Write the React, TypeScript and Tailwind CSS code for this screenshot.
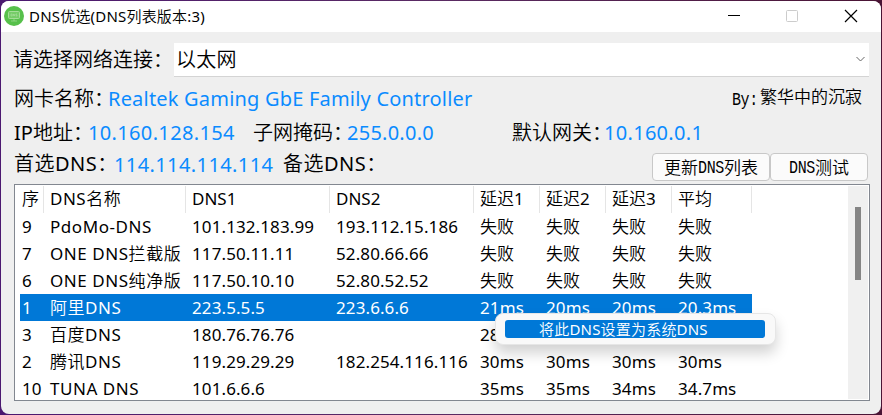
import React from "react";

type Row = string[];

const columns: Row = ["序", "DNS名称", "DNS1", "DNS2", "延迟1", "延迟2", "延迟3", "平均"];

const rows: Row[] = [
  ["9", "PdoMo-DNS", "101.132.183.99", "193.112.15.186", "失败", "失败", "失败", "失败"],
  ["7", "ONE DNS拦截版", "117.50.11.11", "52.80.66.66", "失败", "失败", "失败", "失败"],
  ["6", "ONE DNS纯净版", "117.50.10.10", "52.80.52.52", "失败", "失败", "失败", "失败"],
  ["1", "阿里DNS", "223.5.5.5", "223.6.6.6", "21ms", "20ms", "20ms", "20.3ms"],
  ["3", "百度DNS", "180.76.76.76", "", "28ms", "", "", ""],
  ["2", "腾讯DNS", "119.29.29.29", "182.254.116.116", "30ms", "30ms", "30ms", "30ms"],
  ["10", "TUNA DNS", "101.6.6.6", "", "35ms", "35ms", "34ms", "34.7ms"],
];

const grid = "grid grid-cols-[28px_142px_144px_144px_66px_66px_66px_76px] h-[27px] w-[732px] shrink-0";

function Mono({ children }: { children: React.ReactNode }) {
  return <span className="inline-block translate-y-px scale-y-120 font-['Liberation_Mono','Noto_Sans_CJK_SC',monospace] text-[15px] tracking-[-0.4px]">{children}</span>;
}

function Label({ children, className }: { children: React.ReactNode; className: string }) {
  return <span className={`shrink-0 ${className}`}>{children}</span>;
}

function Button({ children, className }: { children: React.ReactNode; className: string }) {
  return (
    <button className={`flex h-[28px] items-center justify-center rounded-[4px] border border-[#c8c8c8] bg-[#fbfbfb] pt-px text-[17px] leading-none whitespace-nowrap ${className}`}>
      {children}
    </button>
  );
}

export default function App() {
  return (
    <div className="h-[415px] w-[882px] overflow-hidden bg-[linear-gradient(90deg,#4b1870,#5a2b63_50%,#4a1434)] p-px font-['Noto_Sans','Noto_Sans_CJK_SC_DemiLight','Noto_Sans_CJK_SC_Light','Noto_Sans_CJK_SC',sans-serif] text-black">
      <div className="flex h-[413px] w-[880px] flex-col overflow-hidden rounded-[8px] bg-[#efefef]">
        <header className="flex h-[31px] shrink-0 items-center bg-white pl-[3px]">
          <svg width="20" height="20" viewBox="0 0 20 20" className="mb-px shrink-0">
            <circle cx="10" cy="10" r="10" fill="#57c04b" />
            <rect x="4.5" y="5.5" width="11" height="7" rx="1" fill="#76cc68" stroke="#a5dd98" />
            <path d="M7 8v2h1.2V8zM9.5 10V8l1.3 2V8M13 8h-1v1h1v1h-1M10 13v2M7 15h6" fill="none" stroke="#a5dd98" strokeWidth=".7" />
          </svg>
          <h1 className="mb-px ml-[5px] text-[15px] leading-5 font-normal tracking-[0.2px] whitespace-nowrap">DNS优选(DNS列表版本:3)</h1>
          <svg width="134" height="16" viewBox="0 0 134 16" className="mr-[23px] mb-px ml-auto" fill="none">
            <path d="M4 7.5h12" stroke="#000" />
            <rect x="62.5" y="2.5" width="11" height="11" rx="1" stroke="#ccc" />
            <path d="M121 2l12 12M133 2l-12 12" stroke="#000" strokeWidth="1.2" />
          </svg>
        </header>

        <section className="mt-[11px] flex h-[33px] shrink-0 items-center pl-[12px] text-[20px] whitespace-nowrap">
          <Label className="w-[161px]">请选择网络连接：</Label>
          <div className="flex h-[34px] w-[695px] items-center border-b border-[#d4d4d4] bg-white pr-[4px] pl-[2px]">
            <span className="pt-px tracking-[0.3px]">以太网</span>
            <svg width="9" height="6" viewBox="0 0 9 6" className="ml-auto" fill="none">
              <path d="M.5 1l4 4 4-4" stroke="#666" />
            </svg>
          </div>
        </section>

        <section className="mt-px flex h-[43px] shrink-0 items-center pl-[13px] text-[20px] whitespace-nowrap">
          <Label className="w-[94px]">网卡名称：</Label>
          <Label className="w-[624px] tracking-[0.2px] text-[#0a8bff]">Realtek Gaming GbE Family Controller</Label>
          <span className="flex items-baseline pb-[2px] text-[17px]"><span className="w-[28px]"><Mono>By:</Mono></span>繁华中的沉寂</span>
        </section>
        <section className="flex h-[25px] shrink-0 items-center pl-[13px] text-[20px] whitespace-nowrap">
          <Label className="w-[74px]">IP地址：</Label>
          <Label className="w-[165px] tracking-[0.35px] text-[#0a8bff]">10.160.128.154</Label>
          <Label className="w-[94px]">子网掩码：</Label>
          <Label className="w-[165px] tracking-[0.25px] text-[#0a8bff]">255.0.0.0</Label>
          <Label className="w-[92px]">默认网关：</Label>
          <Label className="tracking-[0.3px] text-[#0a8bff]">10.160.0.1</Label>
        </section>
        <section className="flex h-[39px] shrink-0 items-center pl-[13px] text-[20px] whitespace-nowrap">
          <Label className="w-[100px] pb-px tracking-[0.5px]">首选DNS：</Label>
          <Label className="w-[169px] tracking-[0.4px] text-[#0a8bff]">114.114.114.114</Label>
          <Label className="w-[369px] pb-px tracking-[0.5px]">备选DNS：</Label>
          <Button className="mt-[4px] w-[118px]">更新<Mono>DNS</Mono>列表</Button>
          <Button className="mt-[4px] w-[98px]"><Mono>DNS</Mono>测试</Button>
        </section>

        <main className="relative ml-[13px] h-[217px] w-[856px] shrink-0 border border-[#828790] bg-white text-[17px] whitespace-nowrap">
          <div className="flex h-full justify-between pt-px pr-px pb-px pl-[5px]">
            <div className="flex h-full flex-col overflow-hidden">
              <div className={grid}>
                {columns.map((c, i) => (
                  <div key={c} className={`flex items-center border-r border-[#e5e5e5] pb-px pl-[2px] ${i === 7 ? "" : "mr-[4px]"} ${i === 1 ? "tracking-[0.5px]" : ""}`}>
                    {c}
                  </div>
                ))}
              </div>
              {rows.map((row) => (
                <div key={row[0]} className={`${grid} ${row[0] === "1" ? "bg-[#0078d7] text-white" : ""}`}>
                  {row.map((cell, i) => (
                    <span key={i} className={`flex items-center pl-[2px] ${i === 1 ? "tracking-[0.55px]" : "tracking-[0.1px]"}`}>{cell}</span>
                  ))}
                </div>
              ))}
            </div>
            <div className="h-full w-[20px] bg-[#f0f0f0] pt-[21px] pl-[7px]">
              <div className="h-[73px] w-[6px] bg-[#858585]" />
            </div>
          </div>
          <div className="absolute top-[128px] left-[480px] flex h-[32px] w-[281px] items-center rounded-[8px] border border-[#e6e6e6] bg-[#f9f9f9] pl-[9px] shadow-[0_8px_14px_rgba(0,0,0,0.18)]">
            <div className="flex h-[18px] w-[260px] items-center rounded-[3px] bg-[#0078d7] pl-[34px] text-[15px] leading-none tracking-[0.2px] text-white">
              将此DNS设置为系统DNS
            </div>
          </div>
        </main>
      </div>
    </div>
  );
}
